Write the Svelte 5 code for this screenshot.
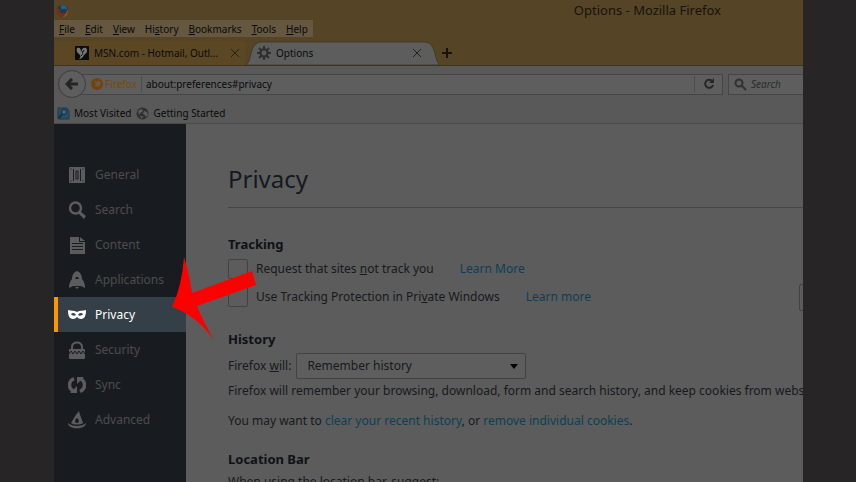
<script lang="ts">
  const menus = [
    ['', 'F', 'ile'],
    ['', 'E', 'dit'],
    ['', 'V', 'iew'],
    ['Hi', 's', 'tory'],
    ['', 'B', 'ookmarks'],
    ['', 'T', 'ools'],
    ['', 'H', 'elp'],
  ];

  const categories = ['General', 'Search', 'Content', 'Applications', 'Privacy', 'Security', 'Sync', 'Advanced'];

  let selected = $state('Privacy');
</script>

<div class="stage">
  <div class="window">
    <header class="chrome">
      <div class="titlebar">
        <svg class="logo" viewBox="0 0 14 14" aria-hidden="true">
          <circle cx="7" cy="7" r="6" fill="#173a5c" />
          <path d="M5 2c3-2 7 0 7 4l-3-1-3 1z" fill="#28617c" />
          <path d="M1 3c0 2 2 2 4 3-2 2 0 5 3 4 2 0 4-2 4-5 2 5-1 9-5 9S-1 9 1 3z" fill="#74300f" />
          <path d="M12 5c2 5-1 9-5 9 3-2 5-4 5-9z" fill="#8a641c" />
        </svg>
        <span class="title">Options - Mozilla Firefox</span>
      </div>

      <nav class="menubar" aria-label="Menu bar">
        {#each menus as [before, key, after]}
          <button type="button">{before}<u>{key}</u>{after}</button>
        {/each}
      </nav>

      <div class="tabs">
        <div class="tab">
          <svg class="tab-icon" viewBox="0 0 14 14" aria-hidden="true">
            <rect width="14" height="14" fill="#0c0c0c" />
            <path d="M2 2c3-1 4 1 4 4 1-4 3-5 5-4 2 2 1 5-1 6-2 2-2 4-5 5H4c2-2 2-3 0-5C2 7 1 4 2 2z" fill="#777" />
            <path d="M7 5c1 2 1 3-1 5M9 4l-1 2" fill="none" stroke="#111" />
          </svg>
          <span class="tab-label">MSN.com - Hotmail, Outl...</span>
          <button type="button" class="close" aria-label="Close MSN.com tab">
            <svg viewBox="0 0 10 10"><path d="M1 1l8 8M9 1l-8 8" /></svg>
          </button>
        </div>
        <div class="tab is-active">
          <svg class="tab-shape" viewBox="0 0 196 25" preserveAspectRatio="none" aria-hidden="true">
            <path d="M0 25C8 23 3 1 17 1H179C193 1 188 23 196 25Z" fill="#5d5d5d" stroke="#44392a" />
          </svg>
          <svg class="tab-icon" viewBox="0 0 14 14" aria-hidden="true">
            <circle cx="7" cy="7" r="3.6" fill="none" stroke="#303030" stroke-width="2.4" />
            <path d="M7 0v3M7 11v3M0 7h3M11 7h3M2 2l2 2M10 10l2 2M12 2l-2 2M4 10l-2 2" stroke="#303030" stroke-width="2" />
          </svg>
          <span class="tab-label">Options</span>
          <button type="button" class="close" aria-label="Close Options tab">
            <svg viewBox="0 0 10 10"><path d="M1 1l8 8M9 1l-8 8" /></svg>
          </button>
        </div>
        <button type="button" class="new-tab" aria-label="New tab">
          <svg viewBox="0 0 12 12"><path d="M6 1v10M1 6h10" /></svg>
        </button>
      </div>
    </header>

    <div class="navbar">
      <button type="button" class="back" aria-label="Back">
        <svg viewBox="0 0 14 12"><path d="M7 1L2 6l5 5M2 6h11" /></svg>
      </button>
      <div class="urlbar">
        <svg class="identity-icon" viewBox="0 0 12 12" aria-hidden="true">
          <circle cx="6" cy="6" r="6" fill="#75420e" />
          <path d="M4 2l1 2 3-1c2 1 2 3 1 4-1 2-4 2-5 0l2-1-2-1z" fill="#66594a" />
        </svg>
        <span class="identity">Firefox</span>
        <input type="text" aria-label="Address" value="about:preferences#privacy" />
        <button type="button" class="reload" aria-label="Reload">
          <svg viewBox="0 0 12 12"><path class="arc" d="M9 3A4 4 0 1 0 10 7" /><path class="head" d="M11 0v5H6z" /></svg>
        </button>
      </div>
      <label class="searchbar">
        <svg viewBox="0 0 13 13" aria-hidden="true"><circle cx="5" cy="5" r="3.5" /><path d="M8 8l4 4" /></svg>
        <input type="search" aria-label="Search" placeholder="Search" />
      </label>
    </div>

    <div class="bookmarks">
      <a href="#most-visited">
        <svg viewBox="0 0 13 13" aria-hidden="true">
          <path d="M1 1h9l2 3v8H1z" fill="#284e65" stroke="#1d3b50" />
          <circle cx="7" cy="5" r="2.5" fill="#45677a" stroke="#152b3b" />
          <path d="M5 7l-3 4" stroke="#152b3b" stroke-width="1.5" />
        </svg>
        Most Visited
      </a>
      <a href="#getting-started">
        <svg viewBox="0 0 13 13" aria-hidden="true">
          <circle cx="6.5" cy="6.5" r="6" fill="#303030" />
          <path d="M2 4l3-2 2 1-1 2-2 1-1 2zM8 4l3 1 1 3-2 2-1-2-2-1zM4 9l3 0-1 3z" fill="#5c5c5c" />
        </svg>
        Getting Started
      </a>
    </div>

    <div class="page">
      <nav class="categories" aria-label="Preferences">
        {#each categories as name}
          <button
            type="button"
            class="category"
            class:is-selected={selected === name}
            aria-current={selected === name ? 'page' : undefined}
            onclick={() => (selected = name)}
          >
            <svg viewBox="0 0 18 18" aria-hidden="true">
              {#if name === 'General'}
                <rect x="1" y="1" width="16" height="16" rx="1" />
                <path class="cut" d="M5.5 3v12M12.500 3v12M8 5h2v8H8zM2.500 3h1M14.500 3h1M2.500 15h1M14.500 15h1" />
              {:else if name === 'Search'}
                <circle cx="7.500" cy="7" r="5.500" fill="none" stroke="currentColor" stroke-width="2.5" />
                <path d="M10 12l2-2 6 5-2 3z" />
              {:else if name === 'Content'}
                <path fill-rule="evenodd" d="M2 1h9v5h6v12H2zM4 7v1h11V7zM4 10v1h11v-1zM4 13v1h11v-1z" />
                <path d="M12 1l5 4h-5z" />
              {:else if name === 'Applications'}
                <path fill-rule="evenodd" d="M9 0c3 1 5 4 5 8 2 2 3 5 3 9l-4-2H5l-4 2c0-4 1-7 3-9 0-4 2-7 5-8zM8 6l-1 2h4l-1-2z" />
                <path d="M7 16h4l-2 2z" />
              {:else if name === 'Privacy'}
                <path fill-rule="evenodd" d="M0 4c3 1 6 0 9 2 3-2 6-1 9-2 0 5-1 9-5 9-2 0-3-1-4-2-1 1-2 2-4 2-4 0-5-4-5-9zM3 8c1 2 4 2 5 1-1-2-3-3-5-1zM10 9c1 1 4 1 5-1-2-2-4-1-5 1z" />
              {:else if name === 'Security'}
                <path d="M4 9V6c0-6 10-6 10 0v3" fill="none" stroke="currentColor" stroke-width="2" />
                <rect x="1" y="8" width="16" height="10" rx="1" />
                <path class="cut" d="M1 13l2-3 2 3 2-3 2 3 2-3 2 3 2-3 2 3" />
              {:else if name === 'Sync'}
                <path d="M6 2.500c-6 3-6 10 0 13M12 15.500c6-3 6-10 0-13" fill="none" stroke="currentColor" stroke-width="3.5" />
                <path d="M2 17h7v-7zM16 1H9v7z" />
              {:else}
                <path fill-rule="evenodd" d="M11 0c1 5 3 8 4 12-3 2-9 2-12 0 2-3 4-8 8-12zM9 7c-2 1-3 5 0 5s2-4 0-5z" />
                <path d="M0 12c4 4 14 4 18 0 0 7-18 7-18 0z" />
              {/if}
            </svg>
            {name}
          </button>
        {/each}
      </nav>

      <main class="pane">
        <h1>Privacy</h1>

        <section>
          <h2>Tracking</h2>
          <div class="check-row">
            <input type="checkbox" id="do-not-track" />
            <label for="do-not-track">Request that sites <u>n</u>ot track you</label>
            <a href="#learn-dnt">Learn More</a>
          </div>
          <div class="check-row">
            <input type="checkbox" id="tracking-protection" />
            <label for="tracking-protection">Use Tracking Protection in Pri<u>v</u>ate Windows</label>
            <a href="#learn-protection">Learn more</a>
            <button type="button" class="exceptions" aria-label="Exceptions"></button>
          </div>
        </section>

        <section>
          <h2>History</h2>
          <div class="history-row">
            <label for="history-mode">Firefox <u>w</u>ill:</label>
            <div class="select">
              <select id="history-mode">
                <option>Remember history</option>
                <option>Never remember history</option>
                <option>Use custom settings for history</option>
              </select>
            </div>
          </div>
          <p>Firefox will remember your browsing, download, form and search history, and keep cookies from websites.</p>
          <p>
            You may want to <a href="#clear">clear your recent history</a>, or
            <a href="#cookies">remove individual cookies</a>.
          </p>
        </section>

        <section>
          <h2>Location Bar</h2>
          <p class="suggest">When using the location bar, suggest:</p>
        </section>
      </main>
    </div>

    <svg class="pointer" viewBox="0 0 84 84" aria-hidden="true">
      <path d="M0 51Q10 30 12 1Q17 17 20 37L80 15L84 29L25 50Q31 65 42 84Q24 59 0 51Z" fill="#f00" />
    </svg>
  </div>
</div>

<style>
  :global(body) {
    margin: 0;
    background: #272526;
  }

  .stage {
    height: 100vh;
    padding: 0 53px 0 54px;
    overflow: hidden;
    font-family: 'Noto Sans', 'Open Sans', sans-serif;
    font-size: 10px;
    line-height: 16px;
    color: #0a0a0a;
  }

  .stage,
  .stage * {
    box-sizing: border-box;
  }

  .window {
    position: relative;
    display: flex;
    flex-direction: column;
    height: 100%;
    overflow: hidden;
    background: #5c5c5c;
  }

  button,
  input,
  select {
    margin: 0;
    padding: 0;
    border: 0;
    background: none;
    font: inherit;
    color: inherit;
  }

  svg {
    display: block;
    flex: none;
  }

  .chrome {
    background: #564427;
  }

  .titlebar {
    display: flex;
    align-items: center;
    justify-content: space-between;
    height: 20px;
    padding: 0 82px 0 2px;
    font-size: 13px;
    color: #17130c;
  }

  .logo {
    width: 13px;
    height: 13px;
  }

  .menubar {
    display: flex;
    gap: 10px;
    width: fit-content;
    height: 17px;
    padding: 0 5px;
    background: #655740;
  }

  .tabs {
    display: flex;
    height: 29px;
    padding-top: 4px;
    border-bottom: 1px solid #3d3323;
  }

  .tab {
    position: relative;
    display: flex;
    align-items: center;
    gap: 5px;
    width: 191px;
    padding: 0 5px 0 21px;
    background: #5c4725;
  }

  .tab.is-active {
    width: 196px;
    padding: 0 19px 0 12px;
    background: none;
  }

  .tab > * {
    position: relative;
  }

  .tab > .tab-shape {
    position: absolute;
    inset: 0;
    width: 100%;
    height: 100%;
  }

  .tab-icon {
    width: 14px;
    height: 14px;
  }

  .tab-label {
    flex: 1;
    white-space: nowrap;
  }

  .close svg {
    width: 10px;
    height: 10px;
    fill: none;
    stroke: #272116;
  }

  .new-tab svg {
    width: 12px;
    height: 12px;
    fill: none;
    stroke: #16120c;
    stroke-width: 2;
  }

  .navbar {
    display: flex;
    align-items: center;
    height: 36px;
    padding-left: 4px;
    background: #595959;
  }

  .back {
    z-index: 1;
    display: grid;
    place-items: center;
    width: 28px;
    height: 28px;
    border: 1px solid #3c3c3c;
    border-radius: 50%;
    background: #5e5e5e;
  }

  .back svg {
    width: 14px;
    height: 12px;
    fill: none;
    stroke: #242424;
    stroke-width: 3;
  }

  .urlbar {
    display: flex;
    flex: 1;
    align-items: center;
    height: 21px;
    margin-left: -8px;
    padding-left: 12px;
    border: 1px solid #454545;
    background: #5e5e5e;
  }

  .identity-icon {
    width: 12px;
    height: 12px;
  }

  .identity {
    padding: 0 4px 0 2px;
    border-right: 1px solid #4c4c4c;
    color: #7a4713;
  }

  .urlbar input {
    flex: 1;
    min-width: 0;
    padding-left: 4px;
  }

  .reload {
    display: grid;
    place-items: center;
    width: 28px;
    height: 16px;
    border-left: 1px solid #4c4c4c;
  }

  .reload svg {
    width: 12px;
    height: 12px;
  }

  .reload .arc {
    fill: none;
    stroke: #262626;
    stroke-width: 2;
  }

  .reload .head {
    fill: #262626;
  }

  .searchbar {
    display: flex;
    align-items: center;
    gap: 4px;
    width: 75px;
    height: 21px;
    margin-left: 5px;
    padding-left: 5px;
    border: 1px solid #454545;
    border-right: 0;
    background: #5e5e5e;
  }

  .searchbar svg {
    width: 13px;
    height: 13px;
    fill: none;
    stroke: #303030;
    stroke-width: 2;
  }

  .searchbar input {
    width: 50px;
  }

  .searchbar input::placeholder {
    font-style: italic;
    color: #2b2b2b;
    opacity: 1;
  }

  .bookmarks {
    display: flex;
    gap: 5px;
    height: 22px;
    padding: 3px 3px 0;
    border-bottom: 1px solid #494949;
    background: #595959;
  }

  .bookmarks a {
    display: flex;
    align-items: center;
    gap: 4px;
    height: 16px;
    color: inherit;
    text-decoration: none;
  }

  .bookmarks svg {
    width: 13px;
    height: 13px;
  }

  .page {
    display: flex;
    flex: 1;
    min-height: 0;
    font-size: 12px;
    line-height: 20px;
    color: #17191c;
  }

  .categories {
    flex: none;
    width: 132px;
    padding-top: 33px;
    background: #181c20;
  }

  .category {
    display: flex;
    align-items: center;
    gap: 9px;
    width: 100%;
    height: 35px;
    padding: 1px 0 0 14px;
    color: #4b4d4e;
  }

  .category svg {
    width: 18px;
    height: 18px;
    fill: #5b5c5d;
    color: #5b5c5d;
  }

  .category .cut {
    fill: none;
    stroke: #181c20;
  }

  .category.is-selected {
    padding-left: 10px;
    border-left: 4px solid #ff9500;
    background: #343f48;
    color: #fff;
  }

  .category.is-selected svg {
    fill: #fff;
    color: #fff;
  }

  .pane {
    flex: 1;
    min-width: 0;
    margin-right: -80px;
    padding: 38px 0 0 42px;
    white-space: nowrap;
  }

  .pane a {
    color: #0c3f56;
    text-decoration: none;
  }

  h1 {
    margin: 0 0 26px;
    padding-bottom: 12px;
    border-bottom: 1px solid #454545;
    font-size: 24px;
    font-weight: 400;
    line-height: 33px;
    color: #14191f;
  }

  h2 {
    margin: 0;
    font-size: 13px;
    font-weight: 700;
    line-height: 21px;
    color: #0e1216;
  }

  section {
    margin-bottom: 18px;
  }

  .check-row {
    display: flex;
    align-items: center;
    height: 28px;
  }

  .check-row input {
    appearance: none;
    width: 20px;
    height: 20px;
    margin-right: 8px;
    border: 1px solid #424242;
    border-radius: 2px;
  }

  .check-row a {
    margin-left: 26px;
  }

  .exceptions {
    width: 84px;
    height: 27px;
    margin-left: auto;
    border: 1px solid #424242;
    border-radius: 2px;
  }

  .history-row {
    display: flex;
    align-items: center;
    gap: 5px;
    height: 31px;
  }

  .select {
    position: relative;
    width: 230px;
  }

  .select::after {
    content: '';
    position: absolute;
    top: 11px;
    right: 8px;
    border: 4px solid transparent;
    border-top: 5px solid #050505;
    border-bottom: 0;
    pointer-events: none;
  }

  select {
    appearance: none;
    display: block;
    width: 100%;
    height: 26px;
    padding-left: 10px;
    border: 1px solid #424242;
    border-radius: 2px;
    background: #5e5e5e;
  }

  p {
    margin: 0 0 10px;
  }

  .suggest {
    padding-top: 2px;
  }

  /* Callout arrow lies over the sidebar and the pane. */
  .pointer {
    position: absolute;
    top: 256px;
    left: 118px;
    width: 84px;
    height: 84px;
  }
</style>
